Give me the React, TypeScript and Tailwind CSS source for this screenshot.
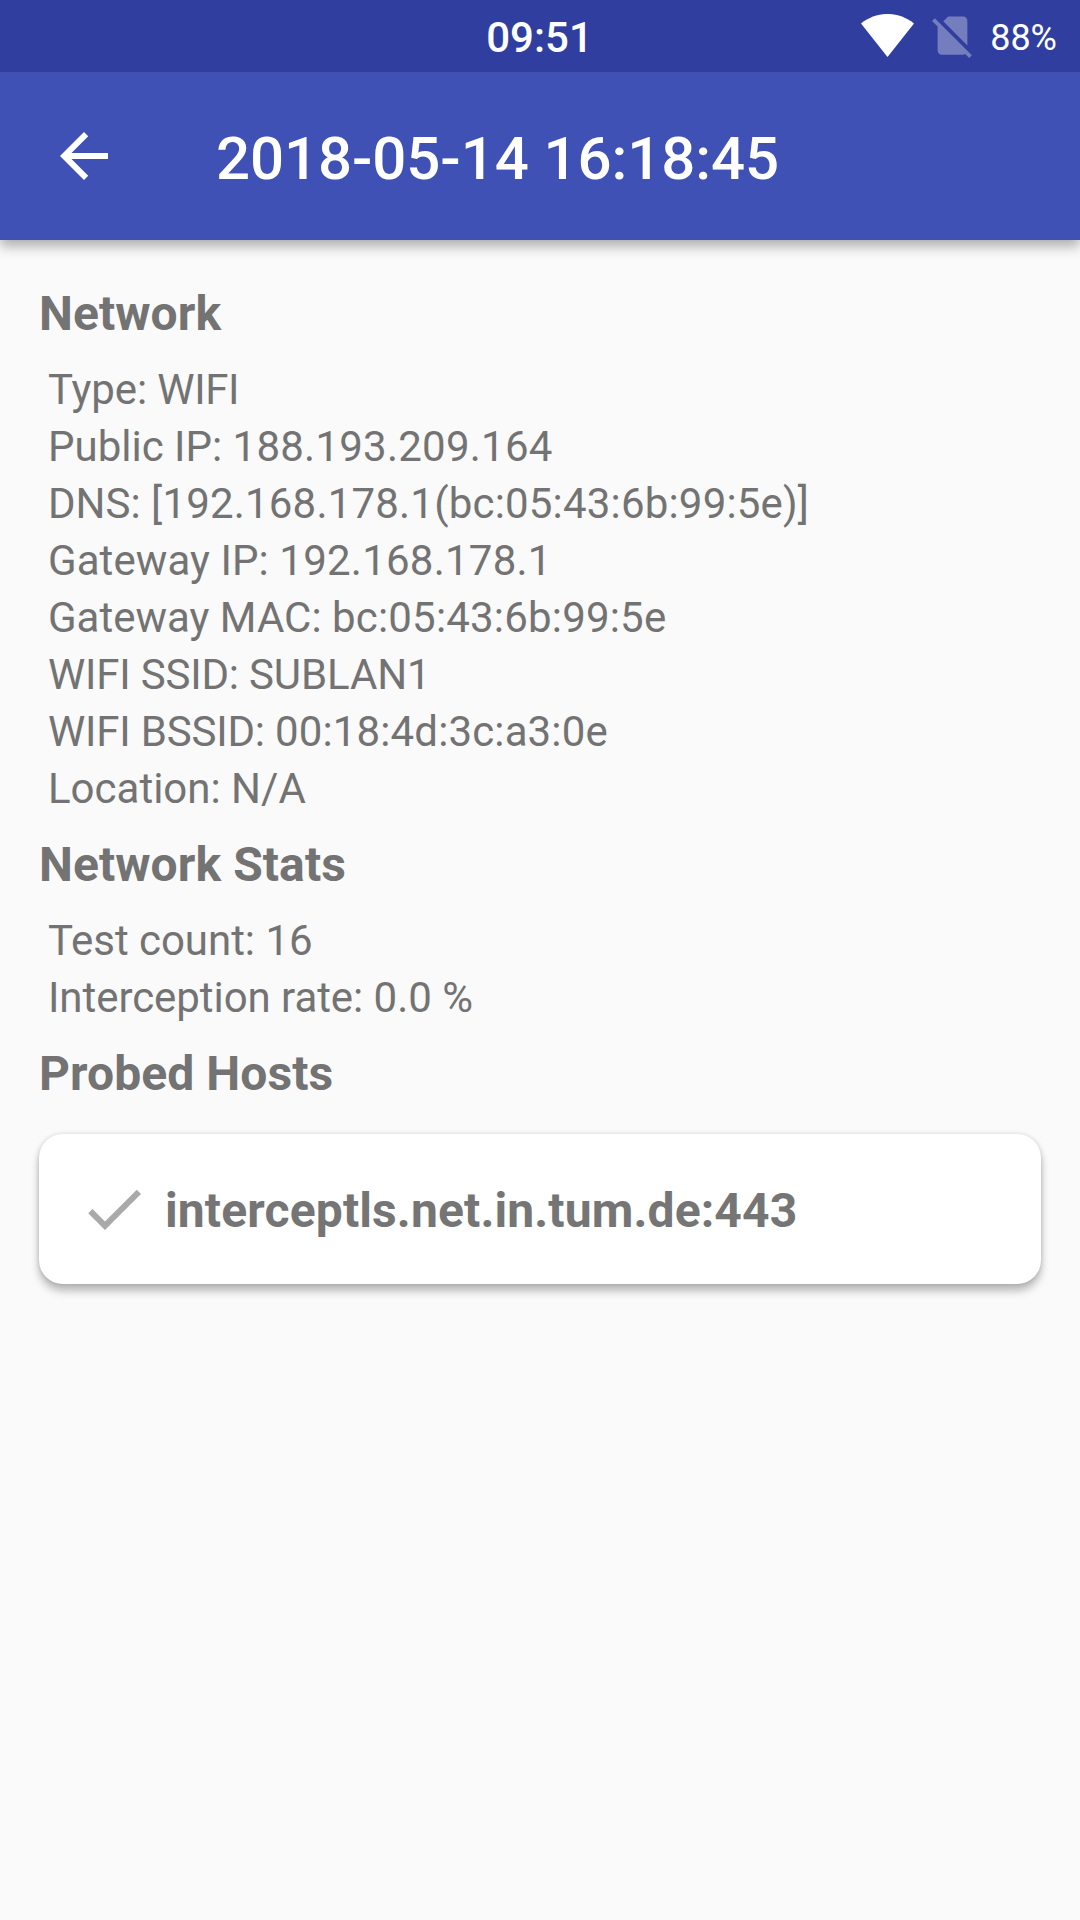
type Line = { label: string; value: string; labelClass?: string; valueClass?: string };

const network: Line[] = [
  { label: "Type: ", value: "WIFI", labelClass: "tracking-[-0.1px]", valueClass: "tracking-[-0.4px]" },
  { label: "Public IP: ", value: "188.193.209.164", valueClass: "tracking-[0.24px]" },
  { label: "DNS: ", value: "[192.168.178.1(bc:05:43:6b:99:5e)]", valueClass: "tracking-[0.19px]" },
  { label: "Gateway IP: ", value: "192.168.178.1", labelClass: "tracking-[0.08px]", valueClass: "tracking-[0.24px]" },
  { label: "Gateway MAC: ", value: "bc:05:43:6b:99:5e", valueClass: "tracking-[0.19px]" },
  { label: "WIFI SSID: ", value: "SUBLAN1", labelClass: "tracking-[-0.2px]", valueClass: "tracking-[-0.1px]" },
  { label: "WIFI BSSID: ", value: "00:18:4d:3c:a3:0e", labelClass: "tracking-[-0.2px]", valueClass: "tracking-[0.14px]" },
  { label: "Location: ", value: "N/A" },
];
const stats: Line[] = [
  { label: "Test count: ", value: "16", labelClass: "tracking-[-0.03px]" },
  { label: "Interception rate: ", value: "0.0 %", labelClass: "tracking-[-0.06px]" },
];

function Heading({ children }: { children: string }) {
  return <h2 className="text-[48px] leading-[56px] font-bold tracking-[0.08px]">{children}</h2>;
}

function Section({ title, lines }: { title: string; lines: Line[] }) {
  return (
    <section>
      <Heading>{title}</Heading>
      <div className="mt-[19px] mb-5 pl-[9px] text-[42px] leading-[57px]">
        {lines.map((l) => (
          <p key={l.label} className="whitespace-pre">
            <span className={l.labelClass}>{l.label}</span>
            <span className={l.valueClass}>{l.value}</span>
          </p>
        ))}
      </div>
    </section>
  );
}

export default function App() {
  return (
    <div className="flex h-[1920px] w-[1080px] flex-col overflow-hidden bg-[#fafafa] font-['Roboto',sans-serif] text-[#737373]">
      <div className="z-10 grid h-[72px] shrink-0 grid-cols-[1fr_auto_1fr] items-center bg-[#303f9f] text-white">
        <span />
        <span className="pt-1 pr-px text-[42px] leading-[48px] font-medium">09:51</span>
        <div className="flex h-full items-start justify-end pr-[23px]">
          <svg className="mt-[14px] h-[43px] w-[53px]" viewBox="0 0 53 43" fill="#fff">
            <path d="M26.5 43 L0 9.5 C16 -3.2 37 -3.2 53 9.5 Z" />
          </svg>
          <svg className="mt-[10px] ml-[13px] size-[51px]" viewBox="0 0 24 24" fill="#747dbd">
            <path d="M18.99 5c0-1.1-.89-2-1.99-2h-7L7.66 5.34 19 16.68 18.99 5zM3.65 3.88L2.38 5.15 5 7.77V19c0 1.1.9 2 2 2h10.01c.35 0 .67-.1.96-.26l1.88 1.88 1.27-1.27L3.65 3.88z" />
          </svg>
          <span className="mt-[17px] ml-3 text-[36px] leading-[42px]">88%</span>
        </div>
      </div>
      <header className="flex h-[168px] shrink-0 items-center bg-[#3f51b5] pl-[48px] text-white shadow-[0_6px_12px_rgba(0,0,0,0.32)]">
        <svg className="size-[72px]" viewBox="0 0 24 24" fill="#fff">
          <path d="M20 11H7.83l5.59-5.59L12 4l-8 8 8 8 1.41-1.41L7.83 13H20v-2z" />
        </svg>
        <h1 className="ml-24 pt-[5px] text-[60px] leading-[72px] font-medium tracking-[-0.09px]">2018-05-14 16:18:45</h1>
      </header>
      <main className="px-[39px] pt-[46px]">
        <Section title="Network" lines={network} />
        <Section title="Network Stats" lines={stats} />
        <Heading>Probed Hosts</Heading>
        <div className="mt-8 flex h-[150px] items-center rounded-[24px] bg-white pl-[39px] shadow-[0_7px_9px_rgba(0,0,0,0.26),0_0_5px_rgba(0,0,0,0.14)]">
          <svg className="size-[72px]" viewBox="0 0 24 24" fill="#a9a9a9">
            <path d="M9 16.17L4.83 12l-1.42 1.41L9 19 21 7l-1.41-1.41z" />
          </svg>
          <span className="ml-[15px] pt-[3px] text-[48px] leading-[56px] font-bold tracking-[0.13px] text-[#757575]">interceptls.net.in.tum.de:443</span>
        </div>
      </main>
    </div>
  );
}
